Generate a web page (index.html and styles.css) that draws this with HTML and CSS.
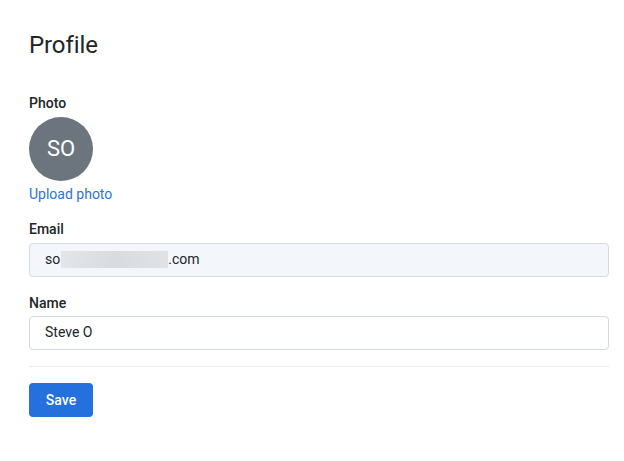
FILE: index.html
```html
<!DOCTYPE html>
<html lang="en">
<head>
<meta charset="utf-8">
<title>Profile</title>
<link rel="stylesheet" href="styles.css">
</head>
<body>
<main class="page">
  <h1 class="title">Profile</h1>
  <section class="field photo-field">
    <div class="label">Photo</div>
    <div class="avatar">SO</div>
    <a class="upload" href="#">Upload photo</a>
  </section>
  <section class="field">
    <div class="label">Email</div>
    <div class="input input-disabled">so<span class="redacted"></span>.com</div>
  </section>
  <section class="field name-field">
    <div class="label">Name</div>
    <div class="input">Steve O</div>
  </section>
  <hr class="divider">
  <button class="save" type="button">Save</button>
</main>
</body>
</html>
```
FILE: styles.css
```css
* { box-sizing: border-box; }
html, body { margin: 0; padding: 0; background: #fff; }
body {
  font-family: Roboto, "Noto Sans", Arial, sans-serif;
  color: #212529;
  font-size: 14px;
  line-height: 21px;
}
.page {
  width: 580px;
  margin-left: 29px;
  padding-top: 31px;
}
.title {
  margin: 0 0 33px 0;
  font-size: 24px;
  font-weight: 400;
  line-height: 28.8px;
  color: #212529;
  letter-spacing: -0.1px;
}
.field {
  display: flex;
  flex-direction: column;
  align-items: flex-start;
  margin-bottom: 16px;
}
.label {
  font-weight: 500;
  color: #212529;
  margin-bottom: 3px;
}
.photo-field { margin-bottom: 14px; }
.photo-field .label { margin-bottom: 3px; }
.name-field .label { margin-bottom: 2px; }
.avatar {
  width: 64px;
  height: 64px;
  border-radius: 50%;
  background: #6c757d;
  color: #fff;
  font-size: 22px;
  display: flex;
  align-items: center;
  justify-content: center;
  margin-bottom: 3px;
}
.upload {
  color: #2b74d9;
  text-decoration: none;
}
.input {
  width: 100%;
  height: 34px;
  border: 1px solid #d3dae3;
  border-radius: 4px;
  padding: 0 15px;
  display: flex;
  align-items: center;
  font-size: 14px;
  color: #212529;
  background: #fff;
}
.input-disabled { background: #f3f6fb; }
.redacted {
  display: inline-block;
  width: 107px;
  height: 17px;
  margin-left: 1px;
  background: linear-gradient(90deg, #e3e5e8, #d9dbde 50%, #e0e2e5);
  filter: blur(0.6px);
}
.divider {
  border: 0;
  border-top: 1px solid #e9ecef;
  margin: 0 0 16px 0;
  height: 0;
}
.save {
  width: 64px;
  height: 34px;
  border: 0;
  border-radius: 4px;
  background: #2470dc;
  color: #fff;
  font-family: inherit;
  font-size: 14px;
  font-weight: 500;
  padding: 0;
  cursor: pointer;
}
```
